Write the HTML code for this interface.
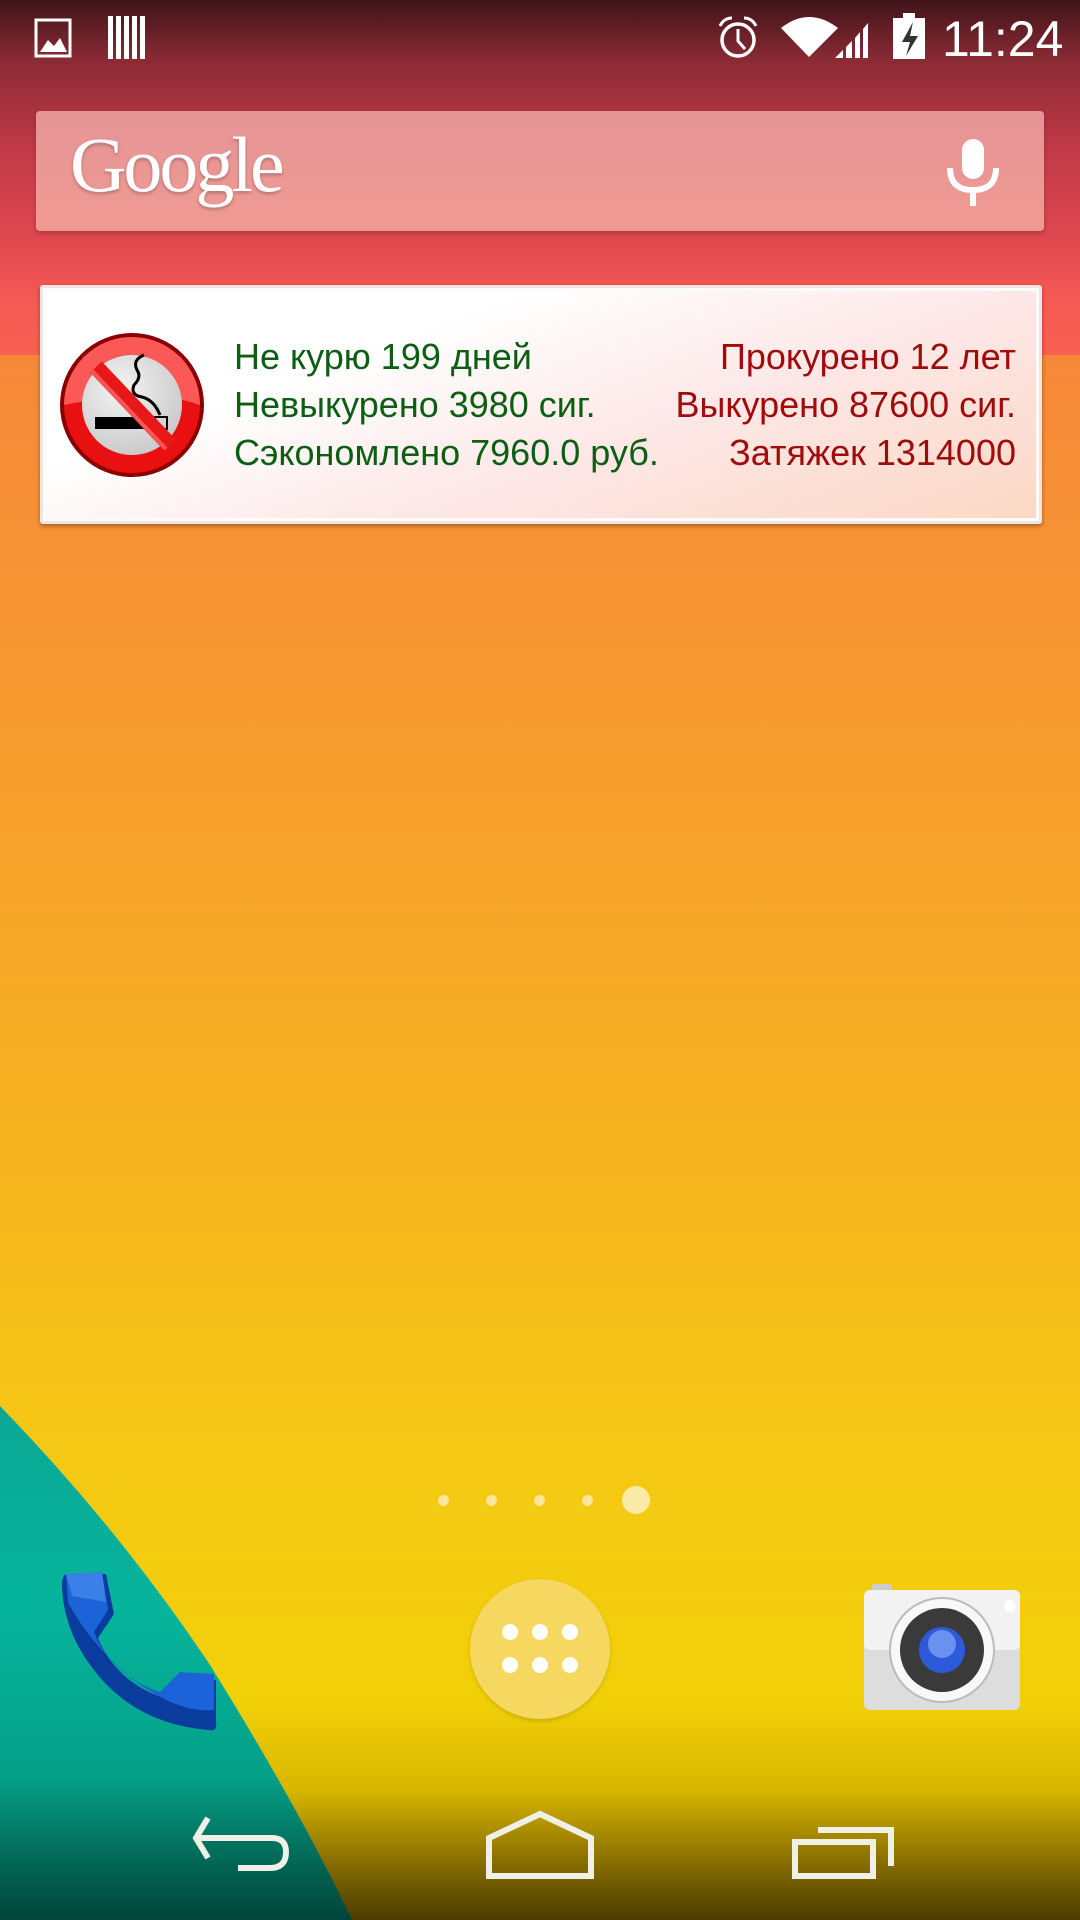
<!DOCTYPE html>
<html><head><meta charset="utf-8"><style>
html,body{margin:0;padding:0}
body{width:1080px;height:1920px;position:relative;overflow:hidden;font-family:"Liberation Sans",sans-serif;
background:linear-gradient(180deg,#f6883a 355px,#f79a30 700px,#f6b020 1100px,#f5c815 1450px,#f2d008 1700px,#d8b600 1790px,#8a7000 1860px,#4a3c00 1920px);}
.top{position:absolute;left:0;top:0;width:1080px;height:355px;background:linear-gradient(180deg,#3e1418 0px,#8a2a34 60px,#c23a48 150px,#e04850 240px,#f65a55 300px,#f86050 355px);}
.teal{position:absolute;left:0;top:0}
.search{position:absolute;left:36px;top:111px;width:1008px;height:120px;background:linear-gradient(180deg,#e59496,#f09a92);border-radius:4px;box-shadow:0 3px 5px rgba(0,0,0,.2)}
.google{position:absolute;left:70px;top:120px;font-family:"Liberation Serif",serif;font-size:78px;color:#fff;letter-spacing:-3px;text-shadow:0 2px 3px rgba(0,0,0,.25)}
.widget{position:absolute;left:40px;top:285px;width:996px;height:233px;border:3px solid #f0e6e0;border-radius:3px;
background:linear-gradient(160deg,#fff 0%,#fff 30%,#fde8e8 60%,#fcd8c4 100%);box-shadow:0 2px 4px rgba(0,0,0,.35), inset 0 0 0 3px #fbfbfb}
.l,.r{position:absolute;font-size:36px;line-height:48px;white-space:nowrap}
.l{left:234px;top:333px;color:#0b5e12}
.r{right:64px;top:333px;color:#a00c0c;text-align:right}
.dot{position:absolute;border-radius:50%;background:#f8e6a0}
.time{position:absolute;left:942px;top:10px;font-size:50px;color:#fff}
</style></head><body>
<div class="top"></div>
<svg class="teal" width="1080" height="1920">
<defs><linearGradient id="tg" x1="0" y1="0" x2="0" y2="1"><stop offset="0" stop-color="#0aa894"/><stop offset=".4" stop-color="#06b49c"/><stop offset=".72" stop-color="#04a088"/><stop offset=".86" stop-color="#02705c"/><stop offset="1" stop-color="#00443a"/></linearGradient></defs>
<path d="M0 1406 Q120 1530 210 1665 Q300 1810 352 1920 L0 1920Z" fill="url(#tg)"/>
</svg>
<svg style="position:absolute;left:0;top:0" width="1080" height="70">
<rect x="36" y="20" width="34" height="36" fill="none" stroke="#fff" stroke-width="3"/>
<path d="M40 52 L48 40 L54 46 L60 38 L67 52Z" fill="#fff"/>
<g fill="#fff"><rect x="108" y="16" width="5" height="43"/><rect x="116" y="16" width="5" height="43"/><rect x="124" y="16" width="5" height="43"/><rect x="132" y="16" width="5" height="43"/><rect x="140" y="16" width="5" height="43"/></g>
<circle cx="738" cy="40" r="16" fill="none" stroke="#fff" stroke-width="3.5"/>
<path d="M738 29 V41 L745 49" stroke="#fff" stroke-width="3" fill="none"/>
<path d="M720 26 Q724 18 732 18 M756 26 Q752 18 744 18" stroke="#fff" stroke-width="3" fill="none"/>
<path d="M781 28 Q809 6 838 28 L809 57Z" fill="#fff"/>
<g fill="#fff"><path d="M835 58 L843 50 L843 58Z"/><path d="M846 47 L852 41 L852 58 L846 58Z"/><path d="M855 38 L860 32 L860 58 L855 58Z"/><path d="M863 29 L868 23 L868 58 L863 58Z"/></g>
<rect x="893" y="18" width="32" height="41" fill="#fff"/><rect x="903" y="13" width="12" height="6" fill="#fff"/>
<path d="M913 22 L902 42 L910 42 L906 56 L918 36 L910 36Z" fill="#333"/>
</svg>
<div class="time">11:24</div>
<div class="search"></div>
<div class="google">Google</div>
<svg style="position:absolute;left:945px;top:138px" width="56" height="70">
<rect x="17" y="1" width="22" height="40" rx="11" fill="#fff"/>
<path d="M5 30 Q5 52 28 52 Q51 52 51 30" stroke="#fff" stroke-width="6" fill="none"/>
<rect x="25" y="52" width="6" height="16" fill="#fff"/>
</svg>
<div class="widget"></div>
<svg style="position:absolute;left:58px;top:331px" width="148" height="148" viewBox="-74 -74 148 148">
<defs><radialGradient id="gr" cx=".4" cy=".35" r=".7"><stop offset="0" stop-color="#f4f4f4"/><stop offset="1" stop-color="#c8c8c8"/></radialGradient></defs>
<circle r="72" fill="#8a0000"/><circle r="68" fill="#e81010"/>
<path d="M-68 0 A68 68 0 0 1 68 0 Q40 -10 0 -8 Q-40 -6 -68 0Z" fill="#ff6a6a" opacity=".8"/>
<circle r="50" fill="url(#gr)"/>
<rect x="-37" y="12" width="60" height="12" fill="#000"/>
<rect x="23" y="12" width="12" height="12" fill="none" stroke="#000" stroke-width="2"/>
<path d="M12 -50 Q0 -45 5 -35 Q10 -28 2 -20 Q-2 -10 10 -8 Q22 -5 28 10" stroke="#000" stroke-width="3" fill="none"/>
<path d="M-36 -38 L38 40" stroke="#e81818" stroke-width="16"/>
<path d="M-40 -34 L34 44" stroke="#ff7070" stroke-width="4" opacity=".7"/>
</svg>
<div class="l">Не курю 199 дней<br>Невыкурено 3980 сиг.<br>Сэкономлено 7960.0 руб.</div>
<div class="r">Прокурено 12 лет<br>Выкурено 87600 сиг.<br>Затяжек 1314000</div>
<div class="dot" style="left:438px;top:1495px;width:11px;height:11px"></div>
<div class="dot" style="left:486px;top:1495px;width:11px;height:11px"></div>
<div class="dot" style="left:534px;top:1495px;width:11px;height:11px"></div>
<div class="dot" style="left:582px;top:1495px;width:11px;height:11px"></div>
<div class="dot" style="left:622px;top:1486px;width:28px;height:28px;background:#faeaa8"></div>
<svg style="position:absolute;left:58px;top:1572px" width="162" height="160" viewBox="0 0 162 160">
<path d="M10 2 L48 2 L56 42 L40 66 Q58 110 106 126 L126 106 L158 108 L158 150 Q160 160 150 158 Q60 150 18 70 Q4 40 4 12 Q4 2 10 2Z" fill="#0a3c9e"/>
<path d="M8 2 L44 0 L50 38 L36 60 Q54 104 102 120 L122 100 L156 102 L156 138 Q120 142 70 104 Q28 66 10 30Z" fill="#1c62d8"/>
<path d="M8 2 L44 0 L48 30 L14 24Z" fill="#3a80e8"/>
</svg>
<div style="position:absolute;left:470px;top:1579px;width:140px;height:140px;border-radius:50%;background:#f6d860;box-shadow:0 2px 4px rgba(0,0,0,.15)"></div>
<svg style="position:absolute;left:500px;top:1620px" width="80" height="60">
<g fill="#fff"><circle cx="10" cy="12" r="8"/><circle cx="40" cy="12" r="8"/><circle cx="70" cy="12" r="8"/><circle cx="10" cy="45" r="8"/><circle cx="40" cy="45" r="8"/><circle cx="70" cy="45" r="8"/></g>
</svg>
<svg style="position:absolute;left:862px;top:1582px" width="160" height="132" viewBox="0 0 160 132">
<rect x="10" y="2" width="20" height="10" rx="2" fill="#ccc"/>
<rect x="2" y="8" width="156" height="120" rx="6" fill="#ddd"/>
<rect x="2" y="8" width="156" height="60" rx="6" fill="#f2f2f2"/>
<circle cx="148" cy="24" r="6" fill="#fff"/>
<circle cx="80" cy="68" r="52" fill="#f8f8f8" stroke="#bbb" stroke-width="2"/>
<circle cx="80" cy="68" r="42" fill="#3a3a3a"/>
<circle cx="80" cy="68" r="23" fill="#2c5ad8"/>
<circle cx="80" cy="62" r="14" fill="#6a90f0"/>
</svg>
<svg style="position:absolute;left:0;top:1810px" width="1080" height="80">
<g stroke="#f0f0e6" stroke-width="6" fill="none">
<path d="M208 8 L196 28 L208 48"/><path d="M198 28 L272 28 Q286 28 286 42 Q286 58 270 58 L238 58"/>
<path d="M489 66 L489 28 L540 4 L591 28 L591 66Z"/>
<rect x="795" y="32" width="78" height="34"/><path d="M818 20 L891 20 L891 56"/>
</g>
</svg>
</body></html>
